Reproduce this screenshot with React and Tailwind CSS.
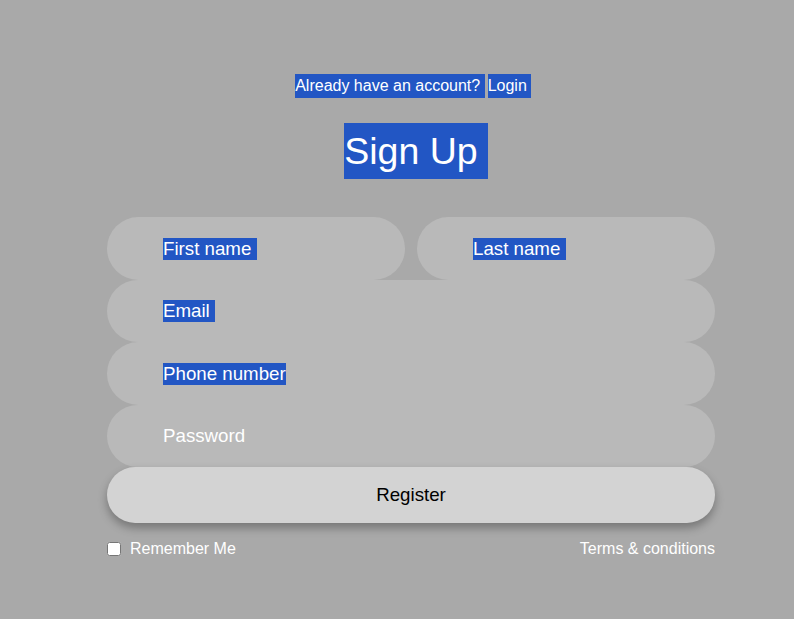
import { useState } from 'react';

const sel = 'bg-[#2256c4]';

function Field({ label, selected = true, className = '' }) {
  return (
    <div className={`h-[62.5px] rounded-full bg-[#b9b9b9] pl-[56px] flex items-center text-white text-[18.72px] leading-[normal] ${className}`}>
      <span className={selected ? sel : ''}>{label}</span>
    </div>
  );
}

export default function App() {
  const [remember, setRemember] = useState(false);

  return (
    <div className="min-h-screen bg-[#a9a9a9] font-['Liberation_Sans',Arial,sans-serif]">
      <div className="w-[608px] ml-[107px] pt-[74px]">
        <p className="text-center text-white text-base leading-6">
          <span className={`inline-block ${sel}`}>Already have an account?{'\u00a0'}</span>
          <a href="#" className={`inline-block ml-[3px] -mr-[4.45px] ${sel}`}>Login{'\u00a0'}</a>
        </p>

        <h1 className="mt-[25px] text-center text-white text-[37.5px] leading-[1.5]">
          <span className={`inline-block -mr-[10.4px] ${sel}`}>Sign Up{'\u00a0'}</span>
        </h1>

        <form className="mt-[38px]" onSubmit={e => e.preventDefault()}>
          <div className="flex gap-[12px]">
            <Field label={'First name\u00a0'} className="flex-1" />
            <Field label={'Last name\u00a0'} className="flex-1" />
          </div>
          <Field label={'Email\u00a0'} />
          <Field label="Phone number" />
          <Field label="Password" selected={false} />
          <button type="submit"
            className="w-full h-[56px] rounded-full bg-[#d3d3d3] text-black text-[18.72px] shadow-[0_5px_10px_rgba(0,0,0,0.3)]">
            Register
          </button>

          <div className="mt-[14px] flex items-center justify-between text-white text-base leading-6">
            <label className="flex items-center">
              <input type="checkbox" checked={remember} onChange={e => setRemember(e.target.checked)}
                className="w-[14px] h-[14px] mr-[9px]" />
              Remember Me
            </label>
            <a href="#">Terms &amp; conditions</a>
          </div>
        </form>
      </div>
    </div>
  );
}
